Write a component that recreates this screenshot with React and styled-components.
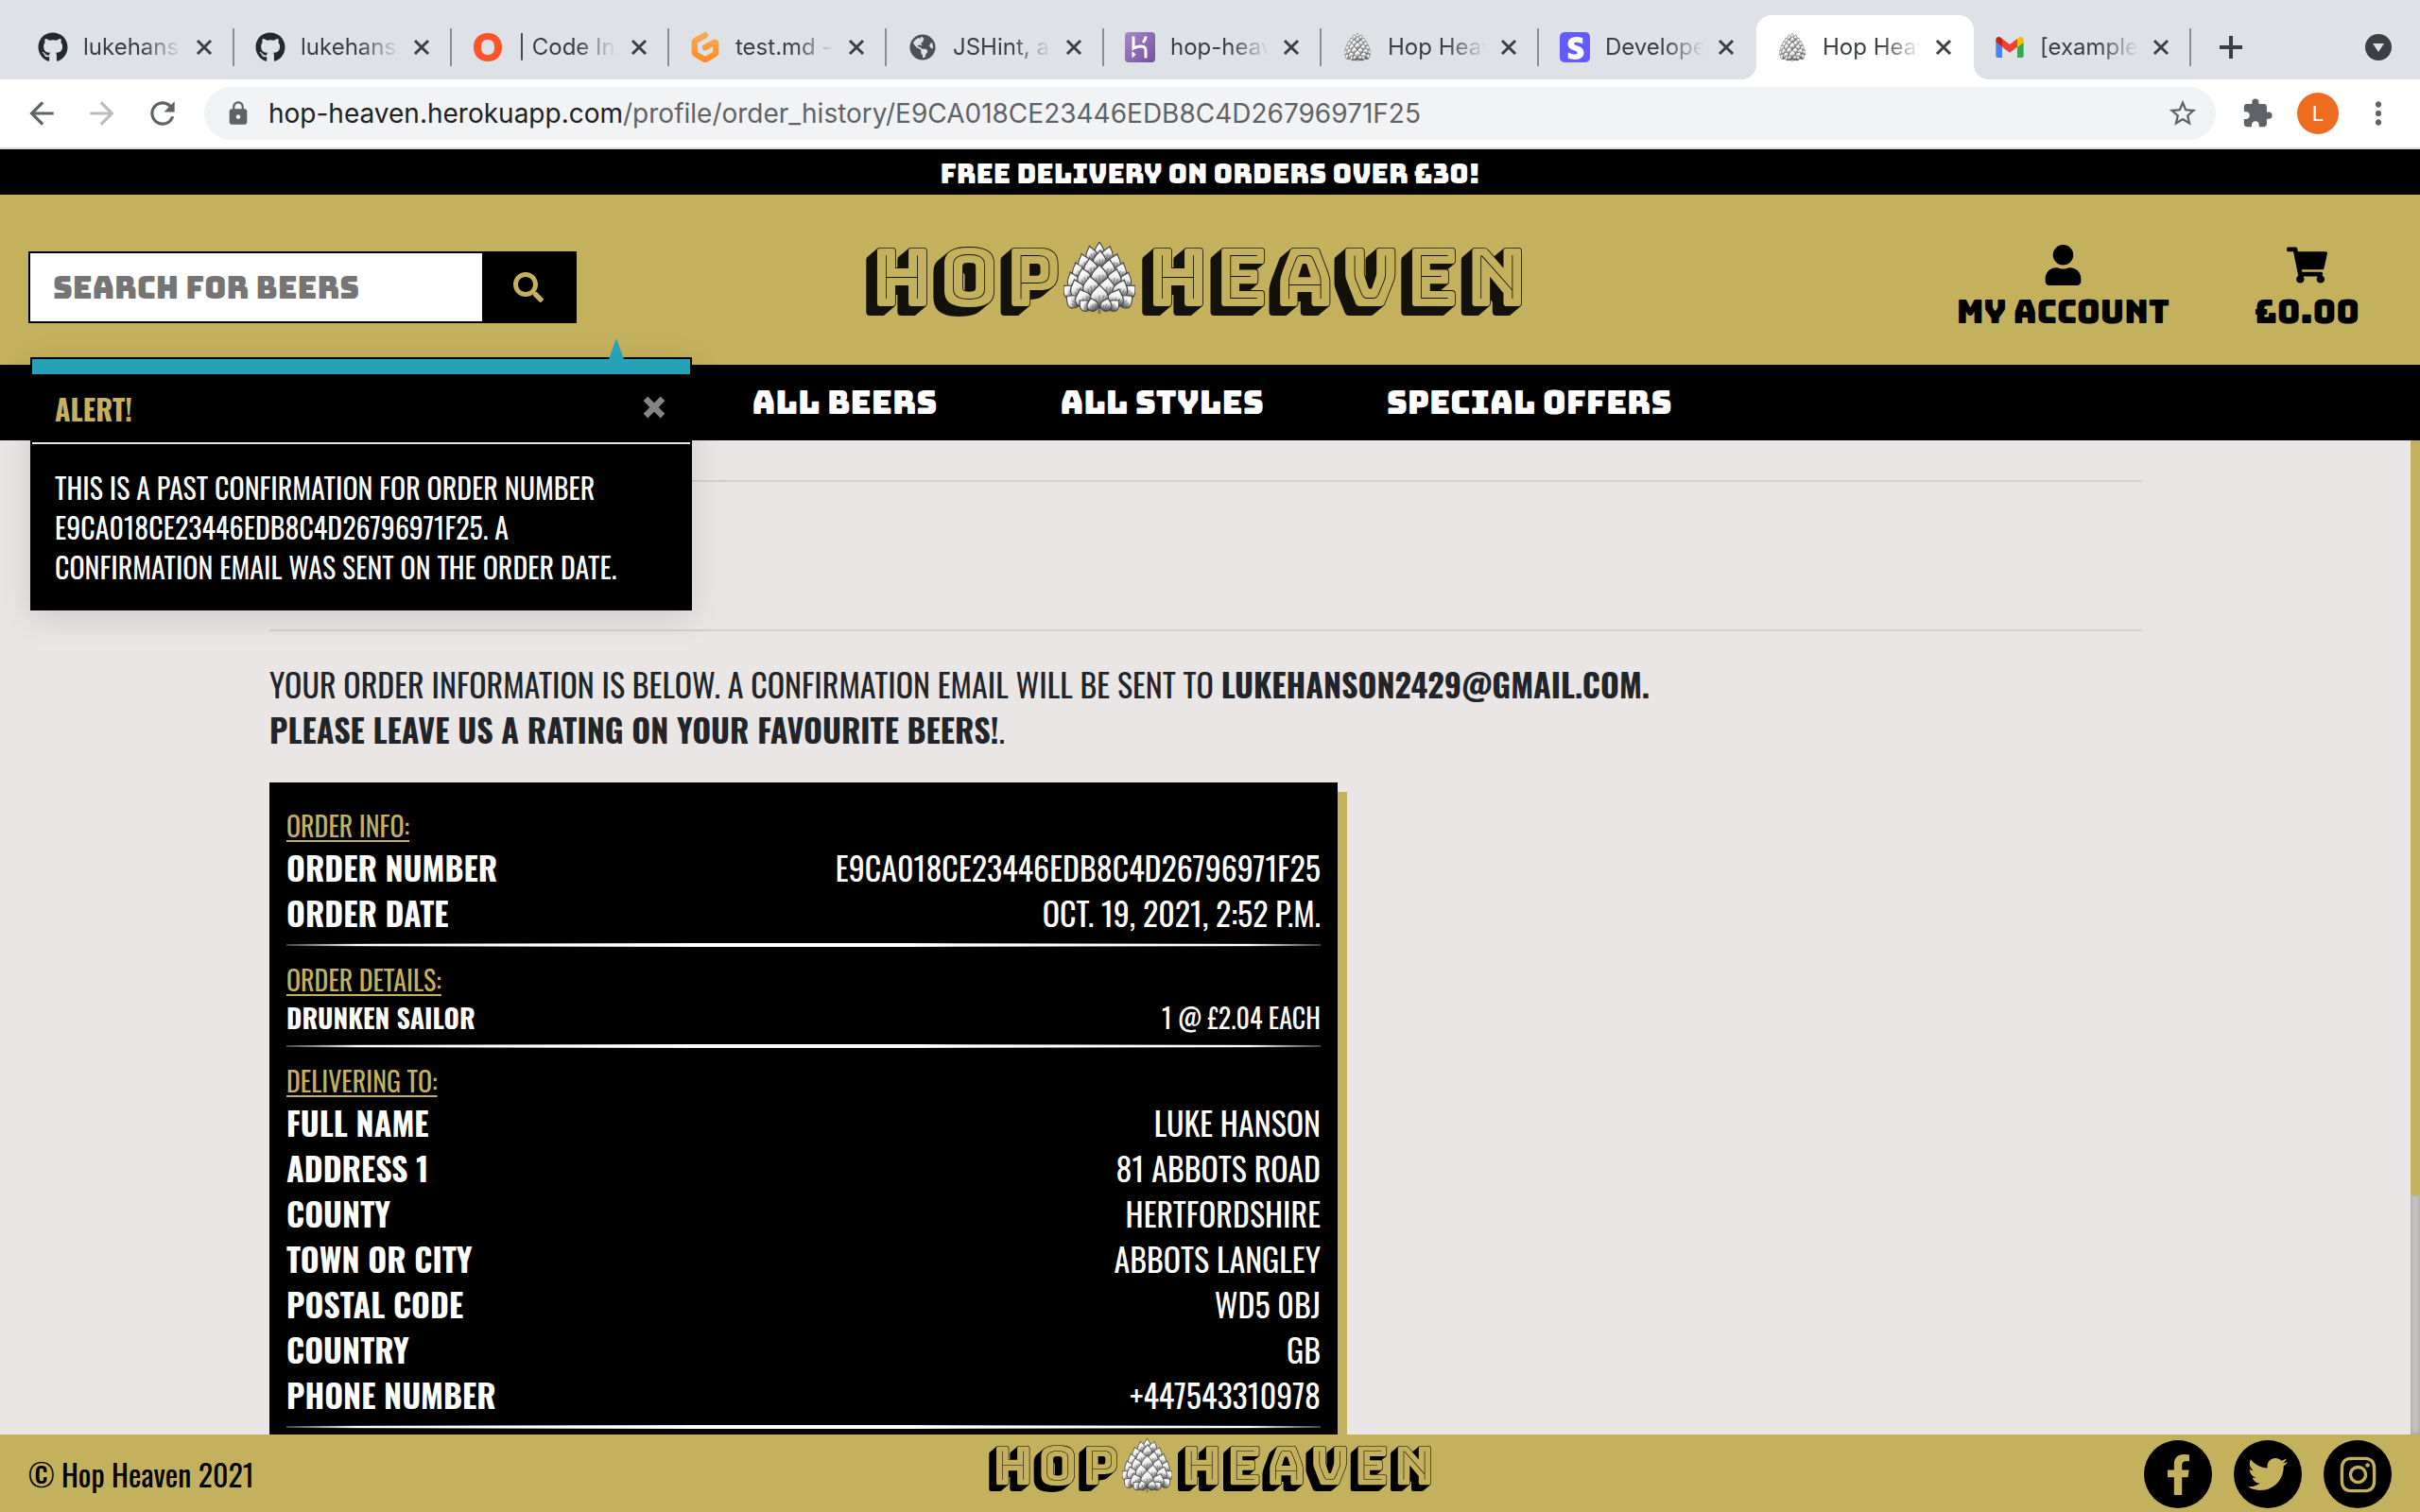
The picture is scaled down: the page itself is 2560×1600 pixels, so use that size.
import React from 'react';
import styled, { createGlobalStyle, css } from 'styled-components';
import { FaGithub, FaGlobeAmericas, FaStripeS, FaSearch, FaUser, FaShoppingCart, FaFacebookF, FaTwitter, FaInstagram } from 'react-icons/fa';
import { SiGitpod } from 'react-icons/si';
import { MdArrowBack, MdArrowForward, MdRefresh, MdLock, MdStarBorder, MdExtension, MdMoreVert } from 'react-icons/md';

const gold = '#c4b15d';
const display = 'Bungee, "Open Sans", sans-serif';
const condensed = 'Oswald, "Roboto Condensed", sans-serif';
const system = 'Inter, "Liberation Sans", sans-serif';

const GlobalStyle = createGlobalStyle`
  *, *::before, *::after { box-sizing: border-box; }
  body { margin: 0; background: #eae6e5; }
  button, input { font: inherit; border: 0; margin: 0; padding: 0; background: none; }
  button { cursor: pointer; color: inherit; }
  a { color: inherit; text-decoration: none; }
  p, h2, h3, dl, dd, dt { margin: 0; }
  svg { display: block; flex: none; }
`;

const Window = styled.div`
  position: relative;
  display: flex;
  flex-direction: column;
  height: 100vh;
  min-width: 1200px;
  overflow: hidden;
`;

/* ---------- browser frame ---------- */

const TabStrip = styled.div`
  display: flex;
  align-items: flex-end;
  height: 84px;
  padding: 0 22px 0 18px;
  background: #dee1e6;
  font-family: ${system};
  font-size: 24px;
  color: #3c4043;
`;

const activeTab = css`
  background: #fff;
  &::before, &::after {
    content: '';
    position: absolute;
    bottom: 0;
    width: 16px;
    height: 16px;
  }
  &::before {
    right: 100%;
    background: radial-gradient(circle at 0 0, transparent 16px, #fff 16px);
  }
  &::after {
    left: 100%;
    background: radial-gradient(circle at 100% 0, transparent 16px, #fff 16px);
  }
`;

const Tab = styled.div`
  position: relative;
  flex: 0 1 230px;
  min-width: 0;
  display: flex;
  align-items: center;
  height: 68px;
  padding-left: 22px;
  border-radius: 16px 16px 0 0;
  ${(p) => p.$active && activeTab}
`;

const Favicon = styled.span`
  flex: 0 0 32px;
  display: flex;
  justify-content: center;
  margin-right: 16px;
`;

const TabTitle = styled.span`
  flex: 1;
  min-width: 0;
  overflow: hidden;
  white-space: nowrap;
  line-height: 32px;
  mask-image: linear-gradient(90deg, #000 60%, transparent 100%);
`;

const TabClose = styled.button`
  flex: 0 0 48px;
  display: flex;
  justify-content: center;
  margin-right: 6px;
`;

const Divider = styled.span`
  width: 2px;
  height: 40px;
  background: ${(p) => (p.$hidden ? 'transparent' : '#8b8e93')};
`;

const StripButton = styled.button`
  display: flex;
  align-items: center;
  justify-content: center;
  width: 84px;
  height: 68px;
  ${(p) => p.$end && 'width: 44px; margin-left: auto;'}
`;

const Toolbar = styled.div`
  display: flex;
  align-items: center;
  height: 74px;
  padding: 0 22px 0 12px;
  border-bottom: 2px solid #dadbdd;
  background: #fff;
  color: #5f6368;
  font-family: ${system};
`;

const ToolButton = styled.button`
  display: flex;
  align-items: center;
  justify-content: center;
  width: 64px;
  height: 56px;
  ${(p) => p.$dim && 'color: #babcbe;'}
  ${(p) => p.$narrow && 'width: 44px;'}
`;

const AddressBar = styled.div`
  flex: 1;
  min-width: 0;
  display: flex;
  align-items: center;
  height: 56px;
  margin: 0 22px 0 12px;
  padding: 0 18px 0 22px;
  border-radius: 28px;
  background: #f1f3f4;
`;

const Url = styled.span`
  flex: 1;
  margin-left: 18px;
  font-size: 28px;
  line-height: 36px;
  color: #5f6368;
`;

const Host = styled.span`
  color: #202124;
`;

const Avatar = styled.button`
  width: 44px;
  height: 44px;
  margin: 0 20px;
  border-radius: 50%;
  background: #ed6c1f;
  color: #fff;
  font-size: 22px;
`;

/* ---------- shop header ---------- */

const Banner = styled.p`
  padding: 6px 0 2px;
  background: #000;
  color: #fff;
  font-family: ${display};
  font-size: 28px;
  line-height: 40px;
  text-align: center;
`;

const Header = styled.header`
  display: grid;
  grid-template-columns: 1fr auto 1fr;
  align-items: center;
  height: 180px;
  padding: 16px 64px 0 30px;
  background: ${gold};
`;

const SearchForm = styled.form`
  display: flex;
  width: 580px;
  height: 76px;
  border: 2px solid #000;
  background: #000;
`;

const SearchInput = styled.input`
  flex: 1;
  min-width: 0;
  padding: 0 24px;
  background: #fff;
  font-family: ${display};
  font-size: 32px;
  color: #000;
  &::placeholder { color: #757575; opacity: 1; }
`;

const SearchButton = styled.button`
  width: 98px;
  display: flex;
  align-items: center;
  justify-content: center;
  color: ${gold};
`;

const LogoLink = styled.a`
  display: flex;
  align-items: center;
  gap: 4px;
  color: #14110a;
  font-family: "Bungee Shade", Bungee, sans-serif;
  font-size: 84px;
  line-height: 1;
  padding-bottom: 20px;
  ${(p) => p.$small && css`
    align-self: start;
    padding-bottom: 0;
    color: #000;
    font-size: 56px;
  `}
`;

const Account = styled.div`
  display: flex;
  justify-content: flex-end;
  gap: 90px;
`;

const AccountLink = styled.a`
  display: flex;
  flex-direction: column;
  align-items: center;
  gap: 8px;
  font-family: ${display};
  font-size: 34px;
  line-height: 40px;
  color: #000;
`;

const Nav = styled.nav`
  display: flex;
  justify-content: center;
  align-items: center;
  gap: 130px;
  height: 80px;
  padding-left: 4px;
  background: #000;
  color: #fff;
  font-family: ${display};
  font-size: 34px;
  line-height: 40px;
`;

/* ---------- message ---------- */

const Toast = styled.section`
  position: absolute;
  top: 378px;
  left: 32px;
  width: 700px;
  border: 2px solid #000;
  background: #000;
  color: #fff;
  box-shadow: 0 8px 32px rgba(0, 0, 0, 0.12);
  font-family: ${condensed};
  font-size: 30px;
  line-height: 42px;
  &::before {
    content: '';
    position: absolute;
    right: 70px;
    bottom: 100%;
    border: solid transparent;
    border-width: 0 8px 22px;
    border-bottom-color: #26a2b8;
  }
`;

const ToastHead = styled.div`
  display: flex;
  align-items: center;
  justify-content: space-between;
  height: 90px;
  padding: 2px 25px 0 24px;
  border-top: 16px solid #26a2b8;
  border-bottom: 2px solid #eae6e5;
`;

const ToastTitle = styled.h2`
  font-size: 30px;
  font-weight: 700;
  color: ${gold};
`;

const ToastClose = styled.button`
  align-self: flex-start;
  margin-top: 20px;
  color: #848484;
`;

const ToastBody = styled.p`
  padding: 25px 24px 23px;
`;

/* ---------- order page ---------- */

const Page = styled.div`
  flex: 1;
  min-height: 0;
  display: grid;
  grid-template-columns: 1fr 10px;
  overflow: hidden;
  background: #eae6e5;
`;

const Main = styled.main`
  min-height: 0;
  overflow: hidden;
  padding-top: 42px;
  font-family: ${condensed};
  font-size: 34px;
  line-height: 48px;
  color: #212529;
`;

const Container = styled.div`
  width: 90%;
  max-width: 1980px;
  margin: 0 auto;
`;

const Rule = styled.hr`
  height: 2px;
  margin: 0 0 ${(p) => (p.$wide ? '156px' : '32px')};
  border: 0;
  background: #d2cecd;
`;

const Card = styled.section`
  max-width: 1130px;
  margin-top: 32px;
  padding: 26px 18px 60px;
  background: #000;
  color: #fff;
  box-shadow: 10px 10px 0 ${gold};
`;

const CardTitle = styled.h3`
  font-size: 28px;
  font-weight: 400;
  line-height: 40px;
  color: ${gold};
  text-decoration: underline;
  text-decoration-thickness: 2px;
  text-underline-offset: 3px;
`;

const Row = styled.div`
  display: flex;
  justify-content: space-between;
  ${(p) => p.$small && 'font-size: 28px; line-height: 40px;'}
`;

const Label = styled.dt`
  font-weight: 700;
`;

const CardRule = styled.hr`
  height: 4px;
  margin: 8px 0 15px;
  border: 0;
  background: linear-gradient(90deg, #444, #fff 7%, #fff 93%, #444);
  clip-path: polygon(0 25%, 40% 0, 60% 0, 100% 25%, 100% 75%, 60% 100%, 40% 100%, 0 75%);
`;

const ScrollTrack = styled.div`
  background: #c6c4c3;
  box-shadow: inset 0 0 5px #9a9a9a;
`;

const ScrollThumb = styled.div`
  height: 76%;
  border-radius: 0 0 5px 5px;
  background: ${gold};
`;

const Footer = styled.footer`
  display: grid;
  grid-template-columns: 1fr auto 1fr;
  align-items: center;
  height: 82px;
  padding: 4px 30px 2px;
  background: ${gold};
  color: #000;
  font-family: ${condensed};
  font-size: 32px;
  line-height: 48px;
`;

const Socials = styled.div`
  display: flex;
  justify-content: flex-end;
  gap: 23px;
`;

const SocialLink = styled.a`
  display: flex;
  align-items: center;
  justify-content: center;
  width: 72px;
  height: 72px;
  border-radius: 50%;
  background: #000;
  color: ${gold};
`;

/* ---------- drawings ---------- */

// Bracts from the tip of the cone down, each row overlapping the one above: [x, y, half width, height, tilt]
const bracts = [
  [38, 16, 6, 16, 0], [31, 19, 7, 15, -14], [45, 19, 7, 15, 16],
  [24, 28, 8, 16, -18], [52, 28, 8, 16, 18], [38, 26, 8, 17, 3],
  [18, 38, 8, 17, -18], [58, 38, 8, 17, 18], [30, 35, 9, 18, -8], [46, 36, 9, 18, 9],
  [13, 48, 8, 17, -20], [63, 48, 8, 17, 20], [24, 45, 9, 18, -14], [52, 46, 9, 18, 14], [38, 44, 10, 20, 0],
  [10, 56, 8, 14, -46], [66, 56, 8, 14, 46], [17, 57, 9, 18, -18], [30, 55, 10, 19, -6], [45, 56, 10, 19, 6], [58, 57, 9, 18, 20],
  [14, 66, 8, 14, -52], [62, 66, 8, 14, 52], [23, 66, 10, 17, -20], [53, 66, 10, 17, 20], [38, 66, 11, 21, 0],
  [26, 70, 7, 12, -48], [50, 70, 7, 12, 48], [32, 71, 7, 12, -16], [44, 71, 7, 12, 16],
];

function HopCone({ size, width = size }) {
  return (
    <svg width={width} height={size} viewBox="0 0 76 76" preserveAspectRatio="none" aria-hidden="true">
      <defs>
        <linearGradient id="bract" x1="0" y1="0" x2="0.2" y2="1">
          <stop offset="0" stopColor="#b8b8b8" />
          <stop offset="0.28" stopColor="#fff" />
          <stop offset="0.5" stopColor="#ededed" />
          <stop offset="0.8" stopColor="#8a8a8a" />
          <stop offset="1" stopColor="#4c4c4c" />
        </linearGradient>
      </defs>
      <path d="M38 66v10" stroke="#777" strokeWidth="3" />
      {bracts.map(([x, y, w, h, tilt], i) => (
        <g key={i} transform={`translate(${x} ${y}) rotate(${tilt})`}>
          <path
            d={`M0 ${-h}C${w * 0.3} ${-h * 0.75} ${w} ${-h * 0.6} ${w * 0.85} ${-h * 0.2}Q${w * 0.6} ${h * 0.15} 0 ${h * 0.2}Q${-w * 0.6} ${h * 0.15} ${-w * 0.85} ${-h * 0.2}C${-w} ${-h * 0.6} ${-w * 0.3} ${-h * 0.75} 0 ${-h}Z`}
            fill="url(#bract)"
            stroke="#454545"
            strokeWidth="1.1"
          />
          <path
            d={`M0 ${h * 0.15}V${-h * 0.45}M${-w * 0.3} ${h * 0.1}L${-w * 0.35} ${-h * 0.3}M${w * 0.3} ${h * 0.1}L${w * 0.4} ${-h * 0.45}M${w * 0.55} ${h * 0.05}L${w * 0.65} ${-h * 0.4}`}
            stroke="#6a6a6a"
            strokeWidth="0.7"
            fill="none"
          />
        </g>
      ))}
    </svg>
  );
}

function RingIcon() {
  return (
    <svg width="30" height="30" viewBox="0 0 30 30" aria-hidden="true">
      <path fill="#ff5328" fillRule="evenodd" d="M15 0C24 0 30 6 30 15s-6 15-15 15S0 24 0 15 6 0 15 0Zm0 7c-5 0-7 3-7 8s2 8 7 8 7-3 7-8-2-8-7-8Z" />
    </svg>
  );
}

function HerokuIcon() {
  return (
    <svg width="32" height="32" viewBox="0 0 32 32" aria-hidden="true">
      <defs>
        <linearGradient id="heroku" x1="0" y1="0" x2="1" y2="1">
          <stop offset="0" stopColor="#a589c8" />
          <stop offset="1" stopColor="#774f9f" />
        </linearGradient>
      </defs>
      <rect width="32" height="32" rx="4" fill="url(#heroku)" />
      <path d="M9 4.500v12.500c4-2 13-4 13 2.500v8M22 4.500c0 2.500-1 4.500-3 6.500" stroke="#fff" strokeWidth="3" fill="none" />
      <path d="M7.500 20v7.500l4-3.700z" fill="#fff" />
    </svg>
  );
}

function StripeIcon() {
  return (
    <svg width="32" height="32" viewBox="0 0 32 32" aria-hidden="true">
      <rect width="32" height="32" rx="5" fill="#635bff" />
      <FaStripeS x="5" y="5" width="22" height="22" color="#fff" />
    </svg>
  );
}

function GitpodIcon() {
  return (
    <>
      <svg width="0" height="0" aria-hidden="true">
        <defs>
          <linearGradient id="gitpod" x1="0" y1="0" x2="0" y2="1">
            <stop offset="0" stopColor="#f5ad5c" />
            <stop offset="1" stopColor="#ff8a1f" />
          </linearGradient>
        </defs>
      </svg>
      <SiGitpod size={32} fill="url(#gitpod)" />
    </>
  );
}

function GmailIcon() {
  return (
    <svg width="30" height="22" viewBox="52 42 88 66" aria-hidden="true">
      <path fill="#4285f4" d="M58 108h14V74L52 59v43c0 3.320 2.690 6 6 6" />
      <path fill="#34a853" d="M120 108h14c3.320 0 6-2.690 6-6V59l-20 15" />
      <path fill="#fbbc04" d="M120 48v26l20-15v-8c0-7.420-8.470-11.650-14.400-7.200" />
      <path fill="#ea4335" d="M72 74V48l24 18 24-18v26L96 92" />
      <path fill="#c5221f" d="M52 51v8l20 15V48l-5.600-4.200c-5.940-4.450-14.400-.22-14.400 7.200" />
    </svg>
  );
}

function CrossIcon({ size, weight }) {
  return (
    <svg width={size} height={size} viewBox="0 0 20 20" aria-hidden="true">
      <path d="M3 3l14 14M17 3L3 17" stroke="currentColor" strokeWidth={weight} fill="none" />
    </svg>
  );
}

function Logo({ small }) {
  return (
    <LogoLink href="#home" aria-label="Hop Heaven" $small={small}>
      <span>HOP</span>
      <HopCone size={small ? 57 : 76} width={small ? 53 : 76} />
      <span>HEAVEN</span>
    </LogoLink>
  );
}

/* ---------- content ---------- */

const tabs = [
  { title: 'lukehans', icon: <FaGithub size={32} color="#24292e" /> },
  { title: 'lukehans', icon: <FaGithub size={32} color="#24292e" /> },
  { title: '| Code In', icon: <RingIcon /> },
  { title: 'test.md -', icon: <GitpodIcon /> },
  { title: 'JSHint, a', icon: <FaGlobeAmericas size={28} color="#4d5156" /> },
  { title: 'hop-heav', icon: <HerokuIcon /> },
  { title: 'Hop Heav', icon: <HopCone size={30} width={28} /> },
  { title: 'Develope', icon: <StripeIcon />, joined: true },
  { title: 'Hop Heav', icon: <HopCone size={30} width={28} />, active: true, joined: true },
  { title: '[example', icon: <GmailIcon /> },
];

const sections = [
  {
    title: 'ORDER INFO:',
    rows: [['ORDER NUMBER', 'E9CA018CE23446EDB8C4D26796971F25'], ['ORDER DATE', 'OCT. 19, 2021, 2:52 P.M.']],
  },
  { title: 'ORDER DETAILS:', small: true, rows: [['DRUNKEN SAILOR', '1 @ £2.04 EACH']] },
  {
    title: 'DELIVERING TO:',
    rows: [
      ['FULL NAME', 'LUKE HANSON'],
      ['ADDRESS 1', '81 ABBOTS ROAD'],
      ['COUNTY', 'HERTFORDSHIRE'],
      ['TOWN OR CITY', 'ABBOTS LANGLEY'],
      ['POSTAL CODE', 'WD5 0BJ'],
      ['COUNTRY', 'GB'],
      ['PHONE NUMBER', '+447543310978'],
    ],
  },
];

export default function App() {
  return (
    <Window>
      <GlobalStyle />
      <TabStrip>
        {tabs.map((tab, i) => (
          <Tab key={i} $active={tab.active}>
            <Favicon>{tab.icon}</Favicon>
            <TabTitle>{tab.title}</TabTitle>
            <TabClose aria-label="Close tab"><CrossIcon size={20} weight={3} /></TabClose>
            <Divider $hidden={tab.joined} />
          </Tab>
        ))}
        <StripButton aria-label="New tab">
          <svg width="24" height="24" viewBox="0 0 24 24"><path d="M12 0v24M0 12h24" stroke="currentColor" strokeWidth="4" /></svg>
        </StripButton>
        <StripButton $end aria-label="Search tabs">
          <svg width="28" height="28" viewBox="0 0 28 28">
            <circle cx="14" cy="14" r="14" fill="#3c4043" />
            <path d="M8 10h12l-6 9z" fill="#dee1e6" />
          </svg>
        </StripButton>
      </TabStrip>
      <Toolbar>
        <ToolButton aria-label="Back"><MdArrowBack size={38} /></ToolButton>
        <ToolButton $dim aria-label="Forward"><MdArrowForward size={38} /></ToolButton>
        <ToolButton aria-label="Reload"><MdRefresh size={38} /></ToolButton>
        <AddressBar>
          <MdLock size={28} />
          <Url><Host>hop-heaven.herokuapp.com</Host>/profile/order_history/E9CA018CE23446EDB8C4D26796971F25</Url>
          <MdStarBorder size={34} />
        </AddressBar>
        <ToolButton $narrow aria-label="Extensions"><MdExtension size={34} /></ToolButton>
        <Avatar aria-label="Profile">L</Avatar>
        <ToolButton $narrow aria-label="Menu"><MdMoreVert size={38} /></ToolButton>
      </Toolbar>

      <Banner>FREE DELIVERY ON ORDERS OVER £30!</Banner>
      <Header>
        <SearchForm role="search">
          <SearchInput type="text" aria-label="Search for beers" placeholder="SEARCH FOR BEERS" />
          <SearchButton type="submit" aria-label="Search"><FaSearch size={32} /></SearchButton>
        </SearchForm>
        <Logo />
        <Account>
          <AccountLink href="#account"><FaUser size={43} />MY ACCOUNT</AccountLink>
          <AccountLink href="#bag"><FaShoppingCart size={43} />£0.00</AccountLink>
        </Account>
      </Header>
      <Nav>
        <a href="#beers">ALL BEERS</a>
        <a href="#styles">ALL STYLES</a>
        <a href="#offers">SPECIAL OFFERS</a>
      </Nav>

      <Page>
        <Main>
          <Container>
            <Rule $wide />
            <Rule />
            <p>YOUR ORDER INFORMATION IS BELOW. A CONFIRMATION EMAIL WILL BE SENT TO <strong>LUKEHANSON2429@GMAIL.COM.</strong></p>
            <p><strong>PLEASE LEAVE US A RATING ON YOUR FAVOURITE BEERS!</strong>.</p>
            <Card>
              {sections.map((section) => (
                <React.Fragment key={section.title}>
                  <CardTitle>{section.title}</CardTitle>
                  <dl>
                    {section.rows.map(([label, value]) => (
                      <Row key={label} $small={section.small}>
                        <Label>{label}</Label>
                        <dd>{value}</dd>
                      </Row>
                    ))}
                  </dl>
                  <CardRule />
                </React.Fragment>
              ))}
            </Card>
          </Container>
        </Main>
        <ScrollTrack><ScrollThumb /></ScrollTrack>
      </Page>

      <Footer>
        <p>© Hop Heaven 2021</p>
        <Logo small />
        <Socials>
          <SocialLink href="#facebook" aria-label="Facebook"><FaFacebookF size={43} /></SocialLink>
          <SocialLink href="#twitter" aria-label="Twitter"><FaTwitter size={42} /></SocialLink>
          <SocialLink href="#instagram" aria-label="Instagram"><FaInstagram size={43} /></SocialLink>
        </Socials>
      </Footer>

      <Toast role="alert">
        <ToastHead>
          <ToastTitle>ALERT!</ToastTitle>
          <ToastClose aria-label="Close"><CrossIcon size={26} weight={5} /></ToastClose>
        </ToastHead>
        <ToastBody>
          THIS IS A PAST CONFIRMATION FOR ORDER NUMBER E9CA018CE23446EDB8C4D26796971F25. A CONFIRMATION EMAIL WAS SENT ON THE ORDER DATE.
        </ToastBody>
      </Toast>
    </Window>
  );
}
